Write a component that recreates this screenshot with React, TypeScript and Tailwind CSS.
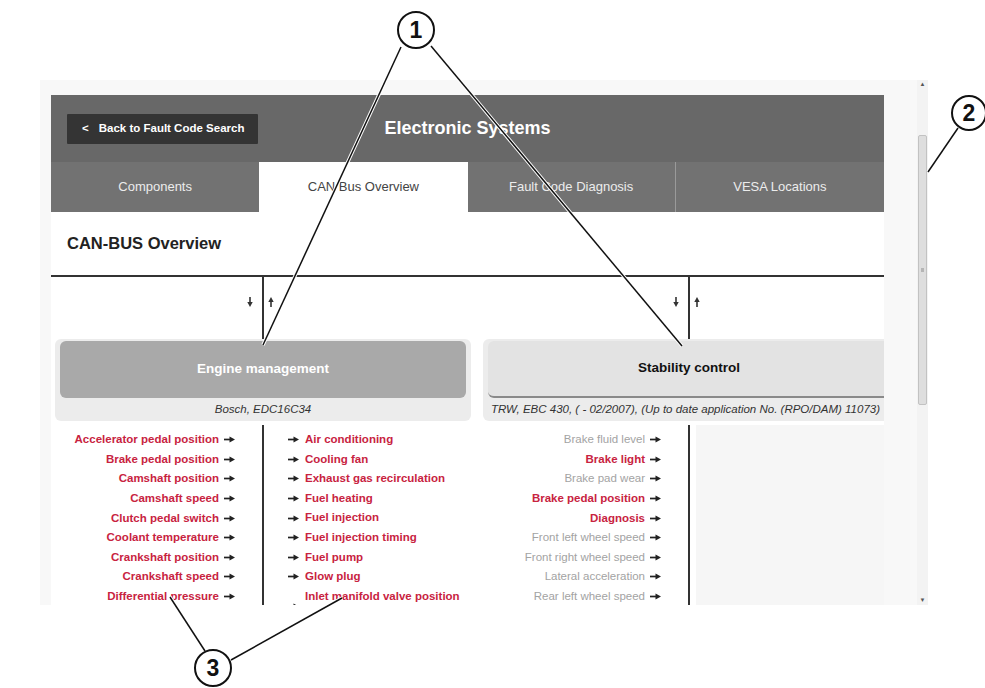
import React from "react";

type Item = { t: string; c: "red" | "gray" };

const leftItems: Item[] = [
  "Accelerator pedal position",
  "Brake pedal position",
  "Camshaft position",
  "Camshaft speed",
  "Clutch pedal switch",
  "Coolant temperature",
  "Crankshaft position",
  "Crankshaft speed",
  "Differential pressure",
].map((t) => ({ t, c: "red" as const }));

const rightItems: Item[] = [
  "Air conditioning",
  "Cooling fan",
  "Exhaust gas recirculation",
  "Fuel heating",
  "Fuel injection",
  "Fuel injection timing",
  "Fuel pump",
  "Glow plug",
  "Inlet manifold valve position control",
].map((t) => ({ t, c: "red" as const }));

const stabItems: Item[] = [
  { t: "Brake fluid level", c: "gray" },
  { t: "Brake light", c: "red" },
  { t: "Brake pad wear", c: "gray" },
  { t: "Brake pedal position", c: "red" },
  { t: "Diagnosis", c: "red" },
  { t: "Front left wheel speed", c: "gray" },
  { t: "Front right wheel speed", c: "gray" },
  { t: "Lateral acceleration", c: "gray" },
  { t: "Rear left wheel speed", c: "gray" },
  { t: "Rear right wheel speed", c: "gray" },
];

function itemCls(c: "red" | "gray") {
  return c === "red" ? "text-[#c8233f] font-bold" : "text-[#a3a3a3] font-normal";
}

function ArrowRight() {
  return (
    <svg width="11" height="7" viewBox="0 0 11 7" className="shrink-0">
      <line x1="0" y1="3.5" x2="7" y2="3.5" stroke="#222" strokeWidth="1.7" />
      <polygon points="5.5,0.6 11,3.5 5.5,6.4" fill="#222" />
    </svg>
  );
}

function ArrowV({ up }: { up?: boolean }) {
  return (
    <svg width="6" height="10" viewBox="0 0 6 10" className={up ? "rotate-180" : ""}>
      <line x1="3" y1="0" x2="3" y2="6" stroke="#333" strokeWidth="1.6" />
      <polygon points="0.3,5 5.7,5 3,10" fill="#333" />
    </svg>
  );
}

function Connector() {
  return (
    <div className="h-[62px] grid grid-cols-[1fr_2px_1fr]">
      <div className="flex justify-end pt-[20px] pr-[9px]">
        <div>
          <ArrowV />
        </div>
      </div>
      <div className="bg-[#333]" />
      <div className="flex justify-start pt-[20px] pl-[4px]">
        <div>
          <ArrowV up />
        </div>
      </div>
    </div>
  );
}

function LeftList({ items }: { items: Item[] }) {
  return (
    <div className="flex flex-col items-end pr-[27px] pt-[5px]">
      {items.map((it) => (
        <div key={it.t} className="flex items-center h-[19.6px] text-[11.5px] whitespace-nowrap">
          <span className={itemCls(it.c)}>{it.t}</span>
          <span className="ml-[5px]">
            <ArrowRight />
          </span>
        </div>
      ))}
    </div>
  );
}

function RightList({ items }: { items: Item[] }) {
  return (
    <div className="flex flex-col items-start pl-[24px] pt-[5px]">
      {items.map((it) => (
        <div key={it.t} className="flex items-center min-h-[19.6px] text-[11.5px]">
          <span className="mr-[6px]">
            <ArrowRight />
          </span>
          <span className={`${itemCls(it.c)} max-w-[168px] leading-[19.6px]`}>{it.t}</span>
        </div>
      ))}
    </div>
  );
}

export default function App() {
  return (
    <div
      className="relative w-[985px] h-[688px] bg-white overflow-hidden"
      style={{ fontFamily: '"Liberation Sans", Arial, sans-serif' }}
    >
      <div className="pt-[80px] pl-[40px]">
        {/* screenshot frame */}
        <div className="w-[888px] h-[525px] bg-[#f8f8f8] flex overflow-hidden">
          <div className="pl-[11px] pt-[15px]">
            <div className="w-[833px] h-[510px] bg-white flex flex-col overflow-hidden">
              {/* header */}
              <div className="h-[67px] shrink-0 bg-[#686868] grid grid-cols-[1fr_auto_1fr] items-center">
                <div className="flex pl-[16px]">
                  <div className="w-[191px] h-[30px] bg-[#343434] rounded-[1px] flex items-center pl-[15px] text-white text-[11.5px] font-bold">
                    <span className="mr-[10px]">&lt;</span>
                    <span>Back to Fault Code Search</span>
                  </div>
                </div>
                <div className="text-white text-[18px] font-bold">Electronic Systems</div>
                <div />
              </div>
              {/* tabs */}
              <div className="h-[50px] shrink-0 grid grid-cols-4 text-[13px]">
                <div className="bg-[#727272] flex items-center justify-center text-[#ececec]">Components</div>
                <div className="bg-white flex items-center justify-center text-[#444]">CAN Bus Overview</div>
                <div className="bg-[#727272] border-r border-[#9a9a9a] flex items-center justify-center text-[#ececec]">Fault Code Diagnosis</div>
                <div className="bg-[#727272] flex items-center justify-center text-[#ececec]">VESA Locations</div>
              </div>
              {/* section title */}
              <div className="h-[63px] shrink-0 flex items-center pl-[16px] text-[16.5px] font-bold text-[#222]">
                CAN-BUS Overview
              </div>
              <div className="h-[2px] shrink-0 bg-[#333]" />
              {/* diagram */}
              <div className="flex gap-[12px] pl-[4px]">
                {/* Engine management */}
                <div className="w-[416px] shrink-0 flex flex-col">
                  <Connector />
                  <div className="h-[82px] bg-[#ececec] rounded-[6px] pt-[2px] px-[5px] flex flex-col">
                    <div className="h-[57px] rounded-[6px] bg-[#a9a9a9] flex items-center justify-center text-white text-[13.5px] font-bold">
                      Engine management
                    </div>
                    <div className="flex-1 flex items-center justify-center italic text-[11.5px] text-[#333]">
                      Bosch, EDC16C34
                    </div>
                  </div>
                  <div className="grid grid-cols-[1fr_2px_1fr] mt-[4px] h-[240px]">
                    <LeftList items={leftItems} />
                    <div className="bg-[#333]" />
                    <RightList items={rightItems} />
                  </div>
                </div>
                {/* Stability control */}
                <div className="w-[412px] shrink-0 flex flex-col">
                  <Connector />
                  <div className="h-[82px] bg-[#ececec] rounded-[6px] pt-[2px] px-[5px] flex flex-col">
                    <div className="h-[57px] rounded-[6px] bg-[#e3e3e3] border-b-2 border-[#8a8a8a] flex items-center justify-center text-[#111] text-[13.5px] font-bold">
                      Stability control
                    </div>
                    <div className="flex-1 flex items-center pl-[3px] italic text-[11.5px] text-[#333] whitespace-nowrap">
                      TRW, EBC 430, ( - 02/2007), (Up to date application No. (RPO/DAM) 11073)
                    </div>
                  </div>
                  <div className="grid grid-cols-[1fr_2px_1fr] mt-[4px] h-[240px]">
                    <LeftList items={stabItems} />
                    <div className="bg-[#333]" />
                    <div className="ml-[6px] mr-[8px] bg-[#f6f6f6]" />
                  </div>
                </div>
              </div>
            </div>
          </div>
          {/* scrollbar */}
          <div className="ml-[33px] w-[11px] h-full bg-[#f3f3f3] flex flex-col items-center">
            <div className="h-[55px] w-full flex justify-center pt-[1px]">
              <span className="text-[6px] leading-[6px] text-[#555]">▲</span>
            </div>
            <div className="h-[270px] w-[9px] bg-[#dedede] border border-[#c2c2c2] rounded-[2px] flex items-center justify-center">
              <div className="w-[3px] h-[4px] bg-[#b5b5b5]" />
            </div>
            <div className="flex-1" />
            <div className="h-[8px] w-full flex justify-center">
              <span className="text-[6px] leading-[6px] text-[#555]">▼</span>
            </div>
          </div>
        </div>
      </div>

      {/* callouts */}
      <svg className="absolute inset-0 pointer-events-none" width="985" height="688" viewBox="0 0 985 688">
        <g stroke="#ffffff" strokeWidth="3.5" fill="none">
          <line x1="401" y1="47" x2="263" y2="345" />
          <line x1="431" y1="46" x2="682" y2="346" />
          <line x1="958" y1="128" x2="928" y2="172" />
          <line x1="205" y1="651" x2="170" y2="597" />
          <line x1="231" y1="660" x2="342" y2="598" />
        </g>
        <g stroke="#111" strokeWidth="1.5" fill="none">
          <line x1="401" y1="47" x2="263" y2="345" />
          <line x1="431" y1="46" x2="682" y2="346" />
          <line x1="958" y1="128" x2="928" y2="172" />
          <line x1="205" y1="651" x2="170" y2="597" />
          <line x1="231" y1="660" x2="342" y2="598" />
        </g>
        <g fill="#ffffff" stroke="#111" strokeWidth="2">
          <circle cx="416" cy="30" r="18" />
          <circle cx="969" cy="113" r="17" />
          <circle cx="213" cy="668" r="18" />
        </g>
        <g fill="#111" fontFamily='"Liberation Sans", Arial, sans-serif' fontWeight="bold" fontSize="23" textAnchor="middle">
          <text x="416" y="38">1</text>
          <text x="969" y="121">2</text>
          <text x="213" y="676">3</text>
        </g>
      </svg>
    </div>
  );
}
